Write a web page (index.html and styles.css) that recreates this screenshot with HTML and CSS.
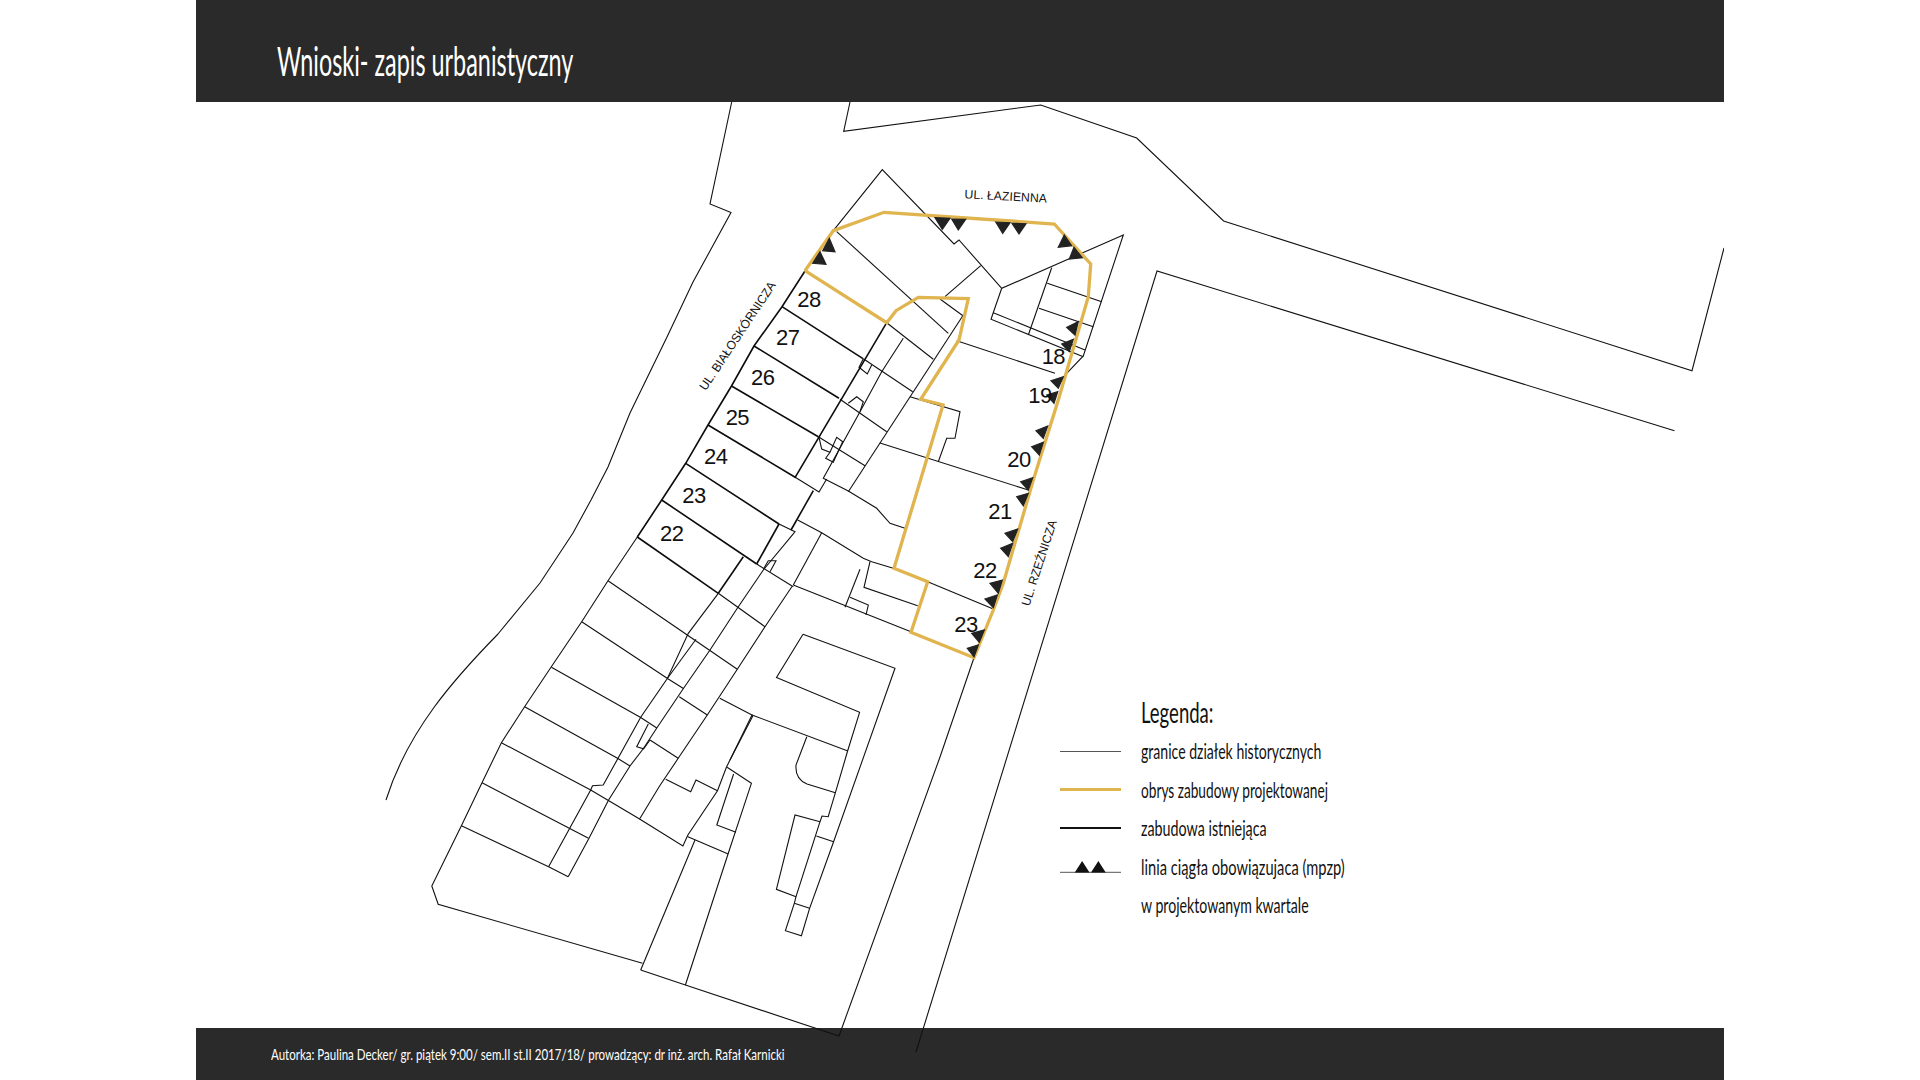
FILE: index.html
```html
<!DOCTYPE html>
<html lang="pl">
<head>
<meta charset="utf-8">
<title>Wnioski- zapis urbanistyczny</title>
<link rel="stylesheet" href="styles.css">
</head>
<body>
<div class="page">
  <header class="top-bar"><h1 class="title">Wnioski- zapis urbanistyczny</h1></header>
  <main class="sheet">
    <section class="legend">
      <h2 class="legend-title">Legenda:</h2>
      <div class="legend-row"><span class="key key-thin"></span><span class="legend-text row-a">granice działek historycznych</span></div>
      <div class="legend-row"><span class="key key-gold"></span><span class="legend-text row-b">obrys zabudowy projektowanej</span></div>
      <div class="legend-row"><span class="key key-black"></span><span class="legend-text row-c">zabudowa istniejąca</span></div>
      <div class="legend-row">
        <svg class="key-tri" viewBox="0 0 62 14"><path class="tri-base" d="M0 12.5H62"/><path d="M15 12.5 22.5 1 30 12.5ZM31.5 12.5 39 1 46.5 12.5Z"/></svg>
        <span class="legend-text row-d">linia ciągła obowiązujaca (mpzp)</span>
      </div>
      <div class="legend-row"><span class="key"></span><span class="legend-text row-e">w projektowanym kwartale</span></div>
    </section>
  </main>
  <footer class="bottom-bar"><p class="credits">Autorka: Paulina Decker/ gr. piątek 9:00/ sem.II st.II 2017/18/ prowadzący: dr inż. arch. Rafał Karnicki</p></footer>
  <svg class="map" viewBox="196 0 1528 1080" aria-label="Plan kwartału">
    <g class="thin">
      <path d="M731.7,102 L710,204 L731,212.5 L693,282 L667,337 L630,413 L608,467 L591,500 L573,533 L540,583 L498,634 C455,678 408,730 386,800"/>
      <polyline points="850,102 843.7,131.3 1040.7,105 1136.7,138 1223.6,221 1692,370.7 1724,248"/>
      <polyline points="1674.5,430.7 1157,271 916,1052"/>
      <polyline points="637.3,537 608,580.7 581.7,621.7 551,667.3 524.6,706.7 501.4,742.7 482,782.7 461.4,825.7 431.8,886 438.2,904.3 642.5,963.3"/>
      <polyline points="640.7,970 685.4,985 839,1036 940,757 974,657.7"/>
      <polyline points="608,580.7 737.3,669.3"/>
      <polyline points="581.7,621.7 668.3,679 683.4,688.5"/>
      <polyline points="551.4,667.3 640.7,717.5 656.8,728"/>
      <polyline points="524.6,706.7 617.5,758.3 630,766"/>
      <polyline points="501.4,742.7 590.7,790 639.6,819"/>
      <polyline points="482,782.7 588.5,838.3"/>
      <polyline points="461.4,825.7 548.6,866.7 568.2,876.7"/>
      <polyline points="718.3,593.3 688.3,633.3 667.5,678.3 640.7,717.3 603.2,785 592.5,785.7 590.7,790 548.6,866.7"/>
      <polyline points="696,639.3 667.5,678.3"/>
      <polyline points="794.3,532.7 763.3,570 737.3,608.3 710,650 683.4,688.5 656.8,728 643.6,748.3 630,766 608.6,800 589,838.3 568.2,876.7"/>
      <polyline points="792,586.5 765,626.7 737.3,669.3 707.3,715 678.2,758.3 659.6,786 639.6,819 682.9,846 687.9,835 717.5,790.7 726.4,767.3 752,715 719.8,698.3"/>
      <polyline points="718.3,593.3 765,626.7"/>
      <polyline points="679.3,696.7 707.3,715"/>
      <polyline points="650,740 678.2,758.3"/>
      <polyline points="648.3,724 636.7,746.7 643.6,748.8 650,740"/>
      <polyline points="665.7,779.3 690.7,791.7 696,780 717.5,790.7"/>
      <polyline points="752,715 847.9,751"/>
      <polyline points="753.3,715 730,760"/>
      <polyline points="803,634.3 895,668.3 833.6,841.7 809.6,908.3 801.4,935.7 785.4,930.7 794.3,903.3 796,896.7 820,821.7 822,816 828.2,816.7 835.4,792.7 847.9,750 859.6,712.3 776.5,677.5 803,634.3"/>
      <path d="M806.8,736.7 796,765 C795,778 802,782 807,784 L835.4,792.7"/>
      <polyline points="820,821.7 795,815 776.4,889.3 796,896.7"/>
      <polyline points="816.4,836 833.6,841.7"/>
      <polyline points="794.3,903.3 809.6,908.3"/>
      <polyline points="727.1,767.3 751.4,783.3 728.2,853.5 685.4,985"/>
      <polyline points="733.6,774 716.8,825 736,832.3"/>
      <polyline points="687.9,836.7 728.2,854"/>
      <polyline points="695,840 640.7,970"/>
      <polyline points="756.7,564 793.3,586.7"/>
      <polyline points="763.3,569.3 768.3,560.7 776,560.7 770,571.7"/>
      <polyline points="793.3,585 911,631.7"/>
      <polyline points="797.7,520 821.7,532.7 863.3,558.3 871.7,561.7 893.3,568.3"/>
      <polyline points="821.7,532.7 793.3,585"/>
      <polyline points="860,569.3 845,607.3"/>
      <polyline points="870,561.7 864,587.3 917.7,605.7"/>
      <polyline points="850,597.3 868.3,605 866,615"/>
      <polyline points="927.7,581.7 993.3,609"/>
      <polyline points="779,524 795,531.7 794.3,532.7"/>
      <polyline points="796,477.7 819,492 826.7,479"/>
      <polyline points="903.3,338.3 881.7,371.7 860,411.7 823.3,478.3 848.3,491 876.7,508.3 890,523.3 905,528.3"/>
      <polyline points="963.3,315 848.3,491.7"/>
      <polyline points="886.7,322.7 933.3,359.3"/>
      <polyline points="863.3,358.7 912.7,391.7"/>
      <polyline points="840,399.3 886.7,431.7"/>
      <polyline points="818.3,436.7 865,465.7"/>
      <polyline points="910,396.7 960,411.7 955,438.3 946.7,438.3 938.3,461.7"/>
      <polyline points="880,443 1028.3,490"/>
      <polyline points="863.3,358.7 859,367.3 867.3,374 871.7,365"/>
      <polyline points="848.3,403.3 856.7,396.7 863.3,401.7 860,411.7"/>
      <polyline points="819,437.3 821.7,449 830,452.3 836.7,437.3 842.7,441.7 833.3,462.3 825.7,458.3 830,452.3"/>
      <polyline points="833.3,230.7 882.3,169.7 954,244 959,240 1001.7,288.3 1123.3,235 1083.3,356 1066.7,373.3"/>
      <polyline points="836.7,231.7 948.3,333.3"/>
      <polyline points="956.7,340.7 1055,373.3"/>
      <polyline points="1001.7,288.3 991,319.3 1083.3,356.7"/>
      <polyline points="993.3,312.7 1085,350"/>
      <polyline points="1051.7,267.7 1028.3,335"/>
      <polyline points="1047.3,283.3 1101.7,301.7"/>
      <polyline points="1039,308.3 1093.3,326.7"/>
      <polyline points="980.7,265.7 945,296.7"/>
      <polyline points="940,299 963.3,316"/>
    </g>
    <g class="thick">
      <polyline points="805,271 782,306.7 754,346 731.5,386 708,425 685.7,463.3 661.7,500 637.3,537"/>
      <polyline points="782,306.7 863,358.7"/>
      <polyline points="754,346 839,398.3"/>
      <polyline points="731.5,386 818.3,436.7"/>
      <polyline points="708,425 796,477.7"/>
      <polyline points="685.7,463.3 779,524"/>
      <polyline points="661.7,500 756.7,564"/>
      <polyline points="637.3,537 718.3,593.3"/>
      <polyline points="886.7,322.7 795,477.7"/>
      <polyline points="813.3,490.7 791,530"/>
      <polyline points="779,524 756.7,564"/>
      <polyline points="743.3,556.7 718.3,593.3"/>
    </g>
    <polyline class="gold" points="805,270.7 833.3,230.7 884,212.3 1054.3,224 1090.7,264 1088.3,296.7 1058.3,400 1033.3,480 1003.3,583.3 993.3,610 974,657.7 911,632.3 927.7,581.7 894,568.3 943,405 920.7,399.3 959,340 968.3,298.7 918.3,297.3 896,310.7 886.7,322.7 805,270.7"/>
    <g class="tris">
      <polygon points="935,217.7 950,218.3 942.3,229.3"/>
      <polygon points="951.7,219 965.7,219.3 958.3,230"/>
      <polygon points="995.7,222 1010,222.7 1002.7,233.3"/>
      <polygon points="1012,223.3 1026,223.7 1019,234"/>
      <polygon points="1064.3,235 1071.7,245.7 1058.3,247.3"/>
      <polygon points="1074,247.3 1082.3,257.7 1069.3,259"/>
      <polygon points="829.3,238.3 835,251.7 822.7,250.7"/>
      <polygon points="820,251.7 826,264.3 812.7,263.3"/>
      <polygon points="1078.3,321.7 1075,335 1066.7,327.3"/>
      <polygon points="1073.3,339.3 1069.3,351.7 1061.7,344"/>
      <polygon points="1063.3,376.7 1058.3,388.3 1051,380.7"/>
      <polygon points="1057.7,391.7 1054,403.3 1046.7,395"/>
      <polygon points="1047.7,426 1043.3,438.3 1036,430.7"/>
      <polygon points="1043.3,442.3 1039.3,455 1031.7,446.7"/>
      <polygon points="1032.7,477.7 1028.3,490 1020.7,481.7"/>
      <polygon points="1028.3,493.3 1023.3,505.7 1016.7,496.7"/>
      <polygon points="1017.7,529 1012.7,541.7 1005,533.3"/>
      <polygon points="1012.7,543.3 1008.3,556.7 1000.7,548.3"/>
      <polygon points="1002.3,580 998.3,593.3 990,583.3"/>
      <polygon points="997.3,595 993.3,607.7 985,599"/>
      <polygon points="984.3,630 979.3,642.3 971.7,633.3"/>
      <polygon points="978.3,645 974,656.7 967.3,648.3"/>
    </g>
    <g class="nums">
      <text x="797.3" y="306.7">28</text>
      <text x="776" y="345">27</text>
      <text x="751" y="385">26</text>
      <text x="725.7" y="425">25</text>
      <text x="704" y="464">24</text>
      <text x="682.3" y="502.7">23</text>
      <text x="660" y="540.7">22</text>
      <text x="1041.7" y="364">18</text>
      <text x="1028.3" y="403.3">19</text>
      <text x="1007.3" y="467.3">20</text>
      <text x="988.3" y="519.3">21</text>
      <text x="973.3" y="578.3">22</text>
      <text x="954.3" y="631.7">23</text>
    </g>
    <g class="streets">
      <text x="964.3" y="198.3" transform="rotate(3 964.3 198.3)" textLength="82.5" lengthAdjust="spacingAndGlyphs">UL. ŁAZIENNA</text>
      <text x="705.7" y="391.3" transform="rotate(-56.4 705.7 391.3)" textLength="127.5" lengthAdjust="spacingAndGlyphs">UL. BIAŁOSKÓRNICZA</text>
      <text x="1029.3" y="606.7" transform="rotate(-72 1029.3 606.7)" textLength="89.4" lengthAdjust="spacingAndGlyphs">UL. RZEŹNICZA</text>
    </g>
  </svg>
</div>
</body>
</html>
```
FILE: styles.css
```css
html, body {
  margin: 0;
  background: #fff;
}

.page {
  position: relative;
  width: 1528px;
  height: 1080px;
  margin: 0 auto;
  display: flex;
  flex-direction: column;
  overflow: hidden;
  font-family: Lato, "Liberation Sans", sans-serif;
}

.top-bar {
  flex: 0 0 102px;
  background: #2a2a2a;
  display: flex;
  align-items: flex-end;
  padding-left: 81px;
  box-sizing: border-box;
}

.title {
  margin: 0 0 17.5px;
  font-size: 40px;
  line-height: 48px;
  font-weight: 400;
  color: #fff;
  white-space: nowrap;
  transform: scaleX(0.585);
  transform-origin: left center;
}

.sheet {
  flex: 1;
  position: relative;
}

.bottom-bar {
  flex: 0 0 52px;
  background: #2a2a2a;
  display: flex;
  align-items: center;
  padding-left: 75px;
  box-sizing: border-box;
}

.credits {
  margin: 0;
  font-size: 16px;
  line-height: 20px;
  color: #fff;
  white-space: nowrap;
  transform: scaleX(0.72);
  transform-origin: left center;
}

.map {
  position: absolute;
  left: 0;
  top: 0;
  width: 1528px;
  height: 1080px;
  pointer-events: none;
}

.thin polyline, .thin path {
  fill: none;
  stroke: #111;
  stroke-width: 1.1;
  stroke-linejoin: miter;
}

.thick polyline {
  fill: none;
  stroke: #0c0c0c;
  stroke-width: 1.6;
}

.gold {
  fill: none;
  stroke: #e0b44e;
  stroke-width: 3.3;
}

.tris polygon {
  fill: #222;
  stroke: #222;
  stroke-width: 1.2;
  stroke-linejoin: miter;
}

.nums text {
  font-family: "Liberation Sans", sans-serif;
  font-size: 22px;
  letter-spacing: -0.6px;
  fill: #111;
}

.streets text {
  font-family: "Liberation Sans", sans-serif;
  font-size: 12.3px;
  fill: #111;
}

.legend {
  position: absolute;
  left: 864px;
  top: 589.6px;
  color: #111;
}

.legend-title {
  margin: 0 0 0 81px;
  font-size: 28.5px;
  line-height: 40.4px;
  font-weight: 400;
  white-space: nowrap;
  transform: scaleX(0.65);
  transform-origin: left center;
}

.legend-row {
  display: flex;
  align-items: center;
  gap: 20px;
  height: 38.5px;
}

.key {
  flex: 0 0 61px;
  display: block;
}

.key-thin {
  border-top: 1px solid #555;
}

.key-gold {
  border-top: 3px solid #e0b44e;
}

.key-black {
  border-top: 2px solid #111;
}

.key-tri {
  flex: 0 0 61px;
  width: 61px;
  height: 14px;
  fill: #111;
}

.tri-base {
  fill: none;
  stroke: #777;
  stroke-width: 1.2;
}

.legend-text {
  font-size: 21.5px;
  white-space: nowrap;
  transform-origin: left center;
}

.row-a { transform: scaleX(0.655); }
.row-b { transform: scaleX(0.636); }
.row-c { transform: scaleX(0.665); }
.row-d { transform: scaleX(0.682); }
.row-e { transform: scaleX(0.657); }
```
